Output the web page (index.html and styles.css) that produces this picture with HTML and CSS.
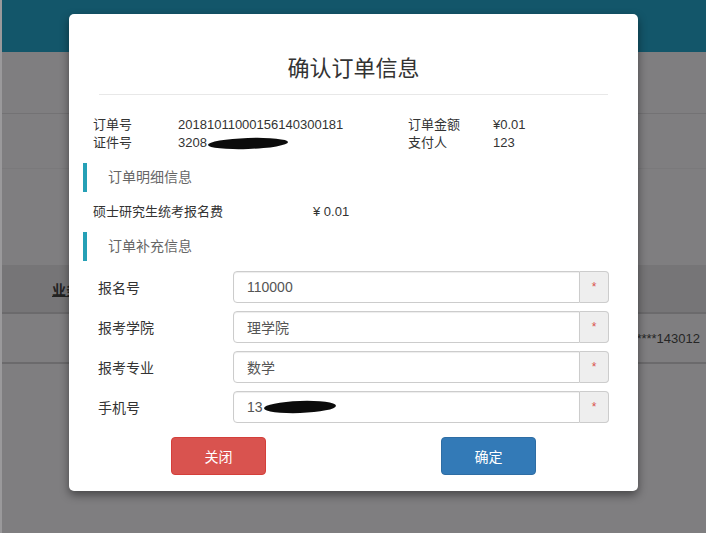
FILE: index.html
```html
<!DOCTYPE html>
<html lang="zh-CN">
<head>
  <meta charset="UTF-8" />
  <meta name="viewport" content="width=device-width, initial-scale=1" />
  <title>确认订单信息</title>
  <link rel="stylesheet" href="styles.css">
</head>
<body>
  <div class="page">
    <div class="top-bar"></div>
    <div class="bg-row bg-row-1"></div>
    <div class="bg-row bg-row-2"></div>
    <div class="bg-space"></div>
    <div class="bg-thead"><span class="bg-th">业务</span></div>
    <div class="bg-trow"><span class="bg-td">****143012</span></div>
    <div class="bg-rest"></div>
  </div>

  <div class="modal">
    <h2 class="modal-title">确认订单信息</h2>
    <div class="modal-body">
      <div class="info-grid">
        <div class="info-label">订单号</div>
        <div class="info-value">20181011000156140300181</div>
        <div class="info-label">订单金额</div>
        <div class="info-value">¥0.01</div>
        <div class="info-label">证件号</div>
        <div class="info-value">3208<span class="blot blot-id"></span></div>
        <div class="info-label">支付人</div>
        <div class="info-value">123</div>
      </div>

      <div class="section-title">订单明细信息</div>
      <div class="detail-line">
        <span class="detail-name">硕士研究生统考报名费</span>
        <span class="detail-price">¥ 0.01</span>
      </div>

      <div class="section-title">订单补充信息</div>
      <div class="form-rows">
        <div class="form-row">
          <label class="form-label">报名号</label>
          <div class="input-group">
            <div class="input-box">110000</div>
            <span class="input-addon">*</span>
          </div>
        </div>
        <div class="form-row">
          <label class="form-label">报考学院</label>
          <div class="input-group">
            <div class="input-box">理学院</div>
            <span class="input-addon">*</span>
          </div>
        </div>
        <div class="form-row">
          <label class="form-label">报考专业</label>
          <div class="input-group">
            <div class="input-box">数学</div>
            <span class="input-addon">*</span>
          </div>
        </div>
        <div class="form-row">
          <label class="form-label">手机号</label>
          <div class="input-group">
            <div class="input-box">13<span class="blot blot-phone"></span></div>
            <span class="input-addon">*</span>
          </div>
        </div>
      </div>

      <div class="btn-row">
        <button type="button" class="btn btn-close">关闭</button>
        <button type="button" class="btn btn-ok">确定</button>
      </div>
    </div>
  </div>
</body>
</html>
```

FILE: styles.css
```css
* {
  box-sizing: border-box;
  margin: 0;
  padding: 0;
}

body {
  font-family: "Liberation Sans", "Noto Sans CJK SC", sans-serif;
  background-color: #7f7e80;
  width: 706px;
  height: 533px;
  overflow: hidden;
  border-left: 2px solid #9a999b;
}

/* page behind the overlay */
.top-bar {
  height: 52px;
  background-color: #13566a;
}

.bg-row-1 {
  height: 62px;
  border-bottom: 1px solid #737274;
}

.bg-row-2 {
  height: 55px;
  border-bottom: 1px solid #7a797b;
}

.bg-space {
  height: 96px;
}

.bg-thead {
  height: 49px;
  background-color: #767577;
  border-bottom: 2px solid #6b6a6c;
  padding-left: 50px;
  display: flex;
  align-items: center;
}

.bg-th {
  display: inline-block;
  width: 17px;
  overflow: hidden;
  white-space: nowrap;
  font-size: 14px;
  font-weight: bold;
  color: #222;
  text-decoration: underline;
}

.bg-trow {
  height: 50px;
  border-bottom: 2px solid #6b6a6c;
  display: flex;
  align-items: center;
  justify-content: flex-end;
  padding-right: 6px;
}

.bg-td {
  font-size: 13px;
  color: #262626;
}

/* modal */
.modal {
  position: absolute;
  left: 69px;
  top: 14px;
  width: 569px;
  height: 477px;
  background-color: #fff;
  border-radius: 5px;
  box-shadow: 0 4px 10px rgba(0, 0, 0, 0.45);
}

.modal-title {
  font-family: "Noto Sans CJK SC", sans-serif;
  font-size: 22px;
  font-weight: normal;
  color: #333;
  text-align: center;
  line-height: 28px;
  padding-top: 38px;
  margin: 0 30px;
  padding-bottom: 14px;
  border-bottom: 1px solid #e8e8e8;
}

.modal-body {
  padding: 0 24px;
}

.info-grid {
  display: grid;
  grid-template-columns: 85px 230px 85px 1fr;
  margin-top: 21px;
  font-size: 13px;
  line-height: 18px;
  color: #333;
}

.info-value {
  display: flex;
  align-items: center;
}

.blot {
  display: inline-block;
  background-color: #0b0b0b;
  border-radius: 50%;
}

.blot-id {
  width: 80px;
  height: 11px;
  margin-left: 1px;
  transform: rotate(-2deg);
}

.blot-phone {
  width: 72px;
  height: 12px;
  margin-left: 1px;
  transform: rotate(-2deg);
}

.section-title {
  margin-left: -10px;
  margin-top: 11px;
  border-left: 4px solid #25a0b6;
  padding-left: 21px;
  height: 29px;
  line-height: 29px;
  font-size: 14px;
  color: #666;
}

.detail-line {
  display: grid;
  grid-template-columns: 220px 1fr;
  margin-top: 12px;
  margin-bottom: 12px;
  font-size: 13px;
  line-height: 16px;
  color: #333;
}

.form-rows {
  display: flex;
  flex-direction: column;
  gap: 8px;
  margin-top: 10px;
  padding: 0 5px;
}

.form-row {
  display: flex;
  align-items: center;
  height: 32px;
}

.form-label {
  width: 135px;
  font-size: 14px;
  color: #333;
}

.input-group {
  flex: 1;
  display: flex;
  height: 32px;
}

.input-box {
  flex: 1;
  border: 1px solid #ccc;
  border-radius: 4px 0 0 4px;
  box-shadow: inset 0 1px 1px rgba(0, 0, 0, 0.075);
  padding: 0 13px;
  display: flex;
  align-items: center;
  font-size: 14px;
  color: #555;
}

.input-addon {
  width: 29px;
  border: 1px solid #ccc;
  border-left: none;
  border-radius: 0 4px 4px 0;
  background-color: #eee;
  color: #d9534f;
  font-size: 12px;
  display: flex;
  align-items: center;
  justify-content: center;
}

.btn-row {
  display: flex;
  gap: 175px;
  padding-left: 78px;
  margin-top: 14px;
}

.btn {
  width: 95px;
  height: 38px;
  border-radius: 4px;
  font-family: "Noto Sans CJK SC", sans-serif;
  font-size: 14px;
  color: #fff;
  cursor: pointer;
}

.btn-close {
  background-color: #d9534f;
  border: 1px solid #d43f3a;
}

.btn-ok {
  background-color: #337ab7;
  border: 1px solid #2e6da4;
}
```
